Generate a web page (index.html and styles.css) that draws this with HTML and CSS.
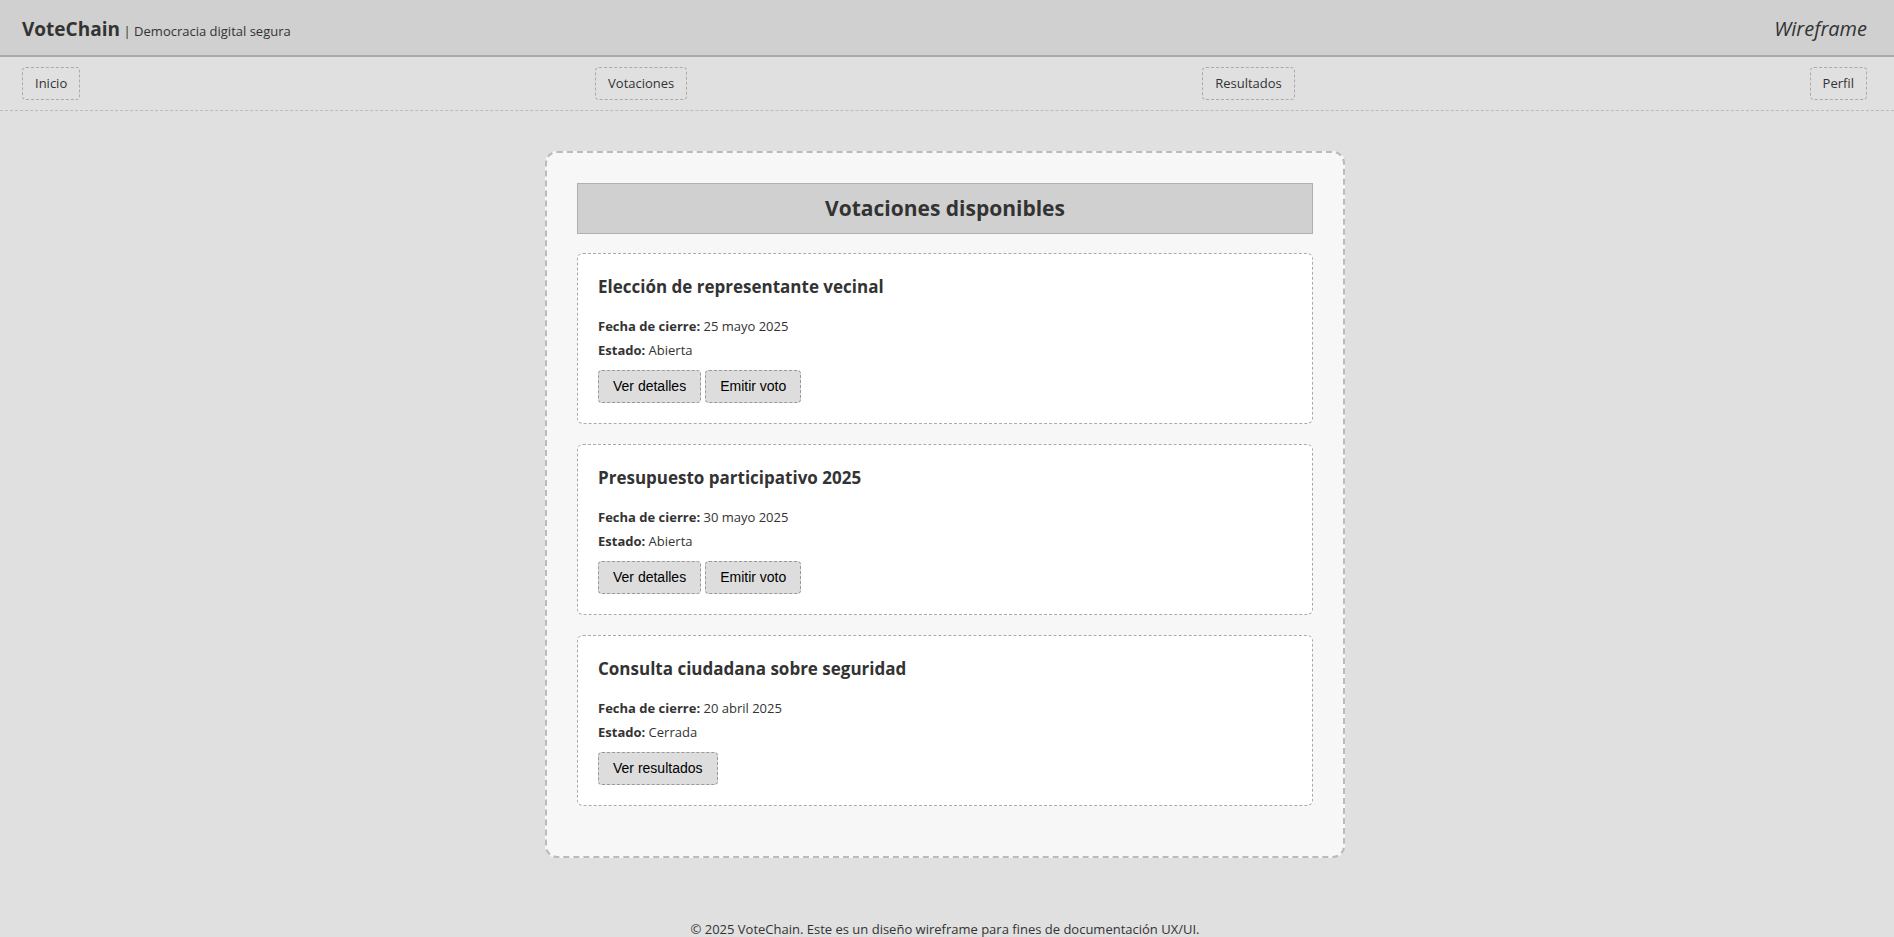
FILE: index.html
```html
<!DOCTYPE html>
<html lang="es">
<head>
<meta charset="utf-8">
<title>VoteChain - Votaciones</title>
<link rel="stylesheet" href="styles.css">
</head>
<body>
<header class="topbar">
  <div class="brand"><span class="brand-name">VoteChain</span> <span class="brand-tag">| Democracia digital segura</span></div>
  <div class="mode">Wireframe</div>
</header>
<nav class="nav">
  <a class="nav-item" href="#">Inicio</a>
  <a class="nav-item" href="#">Votaciones</a>
  <a class="nav-item" href="#">Resultados</a>
  <a class="nav-item" href="#">Perfil</a>
</nav>
<div class="content">
<main class="panel">
  <h2 class="panel-title">Votaciones disponibles</h2>
  <section class="card">
    <h3 class="card-title">Elección de representante vecinal</h3>
    <p class="meta"><strong>Fecha de cierre:</strong> 25 mayo 2025</p>
    <p class="meta"><strong>Estado:</strong> Abierta</p>
    <div class="actions"><button class="btn">Ver detalles</button><button class="btn">Emitir voto</button></div>
  </section>
  <section class="card">
    <h3 class="card-title">Presupuesto participativo 2025</h3>
    <p class="meta"><strong>Fecha de cierre:</strong> 30 mayo 2025</p>
    <p class="meta"><strong>Estado:</strong> Abierta</p>
    <div class="actions"><button class="btn">Ver detalles</button><button class="btn">Emitir voto</button></div>
  </section>
  <section class="card">
    <h3 class="card-title">Consulta ciudadana sobre seguridad</h3>
    <p class="meta"><strong>Fecha de cierre:</strong> 20 abril 2025</p>
    <p class="meta"><strong>Estado:</strong> Cerrada</p>
    <div class="actions"><button class="btn">Ver resultados</button></div>
  </section>
</main>
<footer class="footer">© 2025 VoteChain. Este es un diseño wireframe para fines de documentación UX/UI.</footer>
</div>
</body>
</html>
```
FILE: styles.css
```css
* { box-sizing: border-box; }
body {
  margin: 0;
  background: #e0e0e0;
  color: #333;
  font-family: "Open Sans", "Noto Sans", sans-serif;
  font-size: 14px;
  line-height: 19px;
}
.topbar {
  display: flex;
  justify-content: space-between;
  align-items: center;
  height: 57px;
  padding: 5px 27px 0 22px;
  background: #d0d0d0;
  border-bottom: 2px solid #aaa;
}
.brand-name { font-size: 19px; font-weight: 700; }
.brand-tag { font-size: 13px; }
.mode { font-size: 20px; font-style: italic; margin-top: -3px; }
.nav {
  display: flex;
  justify-content: space-between;
  padding: 10px 27px 10px 22px;
  border-bottom: 1px dashed #bbb;
}
.nav-item {
  display: block;
  padding: 6px 12px;
  border: 1px dashed #aaa;
  border-radius: 4px;
  color: #333;
  text-decoration: none;
  font-size: 13px;
}
.content { padding-right: 4px; }
.panel {
  width: 800px;
  margin: 40px auto 40px;
  padding: 30px;
  background: #f7f7f7;
  border: 2px dashed #bbb;
  border-radius: 12px;
}
.panel-title {
  margin: 0 0 19px;
  padding: 10px;
  background: #d0d0d0;
  border: 1px solid #b0b0b0;
  text-align: center;
  font-size: 21px;
  line-height: 29px;
  font-weight: 700;
}
.card {
  margin-bottom: 20px;
  padding: 20px;
  background: #fff;
  border: 1px dashed #aaa;
  border-radius: 6px;
}
.card-title {
  margin: 0 0 18px;
  font-size: 17px;
  line-height: 25px;
  font-weight: 700;
}
.meta { margin: 0 0 5px; font-size: 13px; }
.actions { display: flex; gap: 4px; margin-top: 10px; }
.btn {
  padding: 8px 14px;
  font-family: "Liberation Sans", Arial, sans-serif;
  font-size: 14px;
  line-height: 15px;
  color: #000;
  background: #ddd;
  border: 1px dashed #999;
  border-radius: 4px;
}
.footer {
  padding: 22px 0 20px;
  text-align: center;
  font-size: 13px;
}
```
